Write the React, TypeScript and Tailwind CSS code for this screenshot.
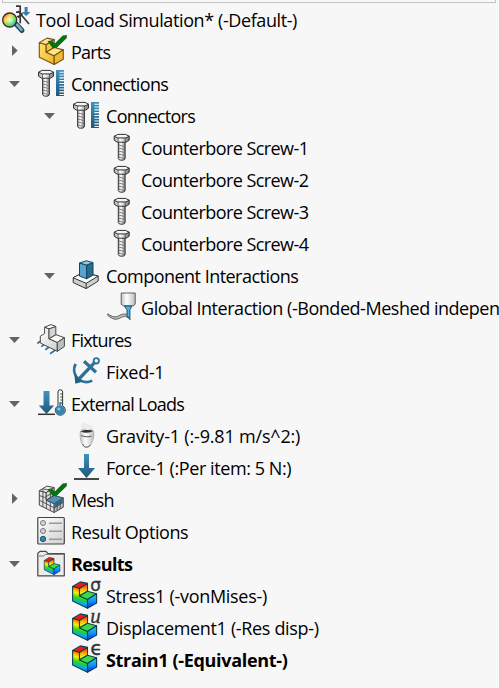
import React from "react";

type IconProps = { children: React.ReactNode };

function Icon({ children }: IconProps) {
  return (
    <svg viewBox="0 0 32 32" className="mr-[2px] h-8 w-8 shrink-0 overflow-visible" strokeLinejoin="round">
      {children}
    </svg>
  );
}

function Gradients() {
  return (
    <svg className="absolute h-0 w-0" aria-hidden="true">
      <defs>
        <linearGradient id="steel" x1="0" x2="1" y1="0" y2="0">
          <stop offset="0" stopColor="#a9a9a9" />
          <stop offset=".4" stopColor="#ffffff" />
          <stop offset="1" stopColor="#777777" />
        </linearGradient>
        <linearGradient id="pearl" x1="0" x2="1" y1="0" y2="0">
          <stop offset="0" stopColor="#c4c4c4" />
          <stop offset=".4" stopColor="#ffffff" />
          <stop offset="1" stopColor="#bdbdbd" />
        </linearGradient>
        <linearGradient id="blue" x1="0" x2="0" y1="0" y2="1">
          <stop offset="0" stopColor="#3f93bf" />
          <stop offset="1" stopColor="#1f577b" />
        </linearGradient>
        <linearGradient id="gold" x1="0" x2="1" y1="0" y2="1">
          <stop offset="0" stopColor="#ffe06a" />
          <stop offset="1" stopColor="#f0b62c" />
        </linearGradient>
        <linearGradient id="paper" x1="0" x2="1" y1="0" y2="1">
          <stop offset="0" stopColor="#ffffff" />
          <stop offset="1" stopColor="#cfcfcf" />
        </linearGradient>
        <linearGradient id="rainbowLeft" gradientUnits="userSpaceOnUse" x1="9" x2="3" y1="3" y2="26">
          <stop offset="0" stopColor="#ff1a00" />
          <stop offset=".25" stopColor="#ff7a00" />
          <stop offset=".45" stopColor="#ffee00" />
          <stop offset=".65" stopColor="#22d822" />
          <stop offset=".85" stopColor="#00a8ff" />
          <stop offset="1" stopColor="#0048e0" />
        </linearGradient>
        <linearGradient id="rainbowRiser" gradientUnits="userSpaceOnUse" x1="12" x2="12" y1="4" y2="16">
          <stop offset="0" stopColor="#ff2000" />
          <stop offset=".45" stopColor="#ffb000" />
          <stop offset=".75" stopColor="#eaff00" />
          <stop offset="1" stopColor="#30d820" />
        </linearGradient>
        <linearGradient id="rainbowRight" gradientUnits="userSpaceOnUse" x1="20" x2="20" y1="14" y2="28">
          <stop offset="0" stopColor="#20d8d0" />
          <stop offset=".5" stopColor="#1490ff" />
          <stop offset="1" stopColor="#0a30d8" />
        </linearGradient>
        <linearGradient id="lensHue" x1="0" x2="1" y1="0" y2="1">
          <stop offset=".08" stopColor="#ff5a48" />
          <stop offset=".35" stopColor="#ffd84a" />
          <stop offset=".6" stopColor="#6be45a" />
          <stop offset=".95" stopColor="#38b4f0" />
        </linearGradient>
        <radialGradient id="lensShine">
          <stop offset="0" stopColor="#ffffff" stopOpacity=".85" />
          <stop offset="1" stopColor="#ffffff" stopOpacity="0" />
        </radialGradient>
      </defs>
    </svg>
  );
}

type BlockProps = { top: string; front: string; riser: string; tread: string; side: string; line: string; width?: number };

function StepBlock({ top, front, riser, tread, side, line, width = 1.1 }: BlockProps) {
  return (
    <g stroke={line} strokeWidth={width}>
      <path d="M.6 6.5 7.5 8.3V16l8 3.5v8.8L.6 21Z" fill={front} />
      <path d="m7.5 8.3 8-4.9v7.9l-8 4.7Z" fill={riser} />
      <path d="m.6 6.5 7.6-4.6 7.3 1.5-8 4.9Z" fill={top} />
      <path d="m7.5 16 8-4.7 9.1 2.4-9.1 5.8Z" fill={tread} />
      <path d="m15.5 19.5 9.1-5.8V23l-9.1 5.3Z" fill={side} />
    </g>
  );
}

function RainbowBlock() {
  return (
    <StepBlock
      top="#f01810"
      front="url(#rainbowLeft)"
      riser="url(#rainbowRiser)"
      tread="#35dd48"
      side="url(#rainbowRight)"
      line="#123f52"
      width={1.1}
    />
  );
}

function Check() {
  return <path d="m10.5 5.2 4-.9 3.4 3.2 7.8-8 4.1-.5v3L19.5 12h-4Z" fill="#0a7012" />;
}

function Screw() {
  return (
    <g stroke="#333" strokeWidth="1">
      <path d="M5.6 9.5h6.8v17l-1.3 1.6H6.9l-1.3-1.6Z" fill="url(#steel)" />
      <path d="m5.8 13 6.4 1.6M5.8 16l6.4 1.6M5.8 19l6.4 1.6M5.8 22l6.4 1.6M5.8 25l6.4 1.6" strokeWidth=".8" stroke="#666" />
      <path d="M1.5 4.2v4l3 2h9l3-2v-4Z" fill="url(#steel)" />
      <path d="m1.5 4.3 3.6-1.9H13l3.5 1.9L13 5.9H5.1Z" fill="#f5f5f5" />
      <path d="M5.4 6v4M12.6 6v4" strokeWidth=".7" />
    </g>
  );
}

const screwIcon = (
  <Icon>
    <g transform="translate(5.7 0)">
      <Screw />
    </g>
  </Icon>
);

const connectionsIcon = (
  <Icon>
    <Screw />
    <path
      d="M19 2h8v1.7h-4.6v1.1H27v1.7h-4.6v1.1H27v1.7h-4.6v1.1H27v1.7h-4.6v1.1H27v1.7h-4.6V16H27v1.7h-4.6v1.1H27v1.7h-4.6v1.1H27v1.7h-4.6v1.1H27v1.7h-4.6V27H27v1h-8Z"
      fill="url(#blue)"
    />
  </Icon>
);

const studyIcon = (
  <Icon>
    <g stroke="#383838" fill="none" strokeWidth="1.7">
      <path d="M14 2.2h4.2v17M18 8.2h-4M15 12.5h3M16 7l11 13" />
      <path d="m20.5 9.5-4.5 4" />
    </g>
    <path d="M22.6 3h3v5h3l-4.5 4-4.5-4h3Z" fill="#3a7fa8" />
    <path d="m14.5 20.5 5.5 6" stroke="#21485f" strokeWidth="5" strokeLinecap="round" />
    <path d="m15 20.6 4.6 5.2" stroke="#7eb1cc" strokeWidth="2.5" strokeLinecap="round" />
    <circle cx="7.7" cy="16" r="7" fill="url(#lensHue)" stroke="#303030" strokeWidth="1.4" />
    <circle cx="8" cy="16" r="4.8" fill="url(#lensShine)" />
  </Icon>
);

const partsIcon = (
  <Icon>
    <g transform="translate(1.7 .2)">
      <StepBlock top="#ffe68c" front="url(#gold)" riser="#f5c644" tread="#ffe584" side="#f1ba32" line="#76521b" />
    </g>
    <Check />
  </Icon>
);

const interactionsIcon = (
  <Icon>
    <g stroke="#333" strokeWidth="1">
      <path d="m1.2 17.8 10-5.5 15 3.8v5l-12 7.5-13-6Z" fill="#cfcfcf" />
      <path d="m1.2 17.8 10-5.5 15 3.8-12 7.2Z" fill="#fafafa" />
      <path d="M14.2 23.3v5.3" />
    </g>
    <g stroke="#15445e" strokeWidth="1">
      <path d="m7.5 3 7.2 2v13.7l-7.2-2.6Z" fill="#58a4cc" />
      <path d="m14.7 5 6.3-2.5v12.7l-6.3 3.5Z" fill="#286b93" />
      <path d="m7.5 3 6.7-2.2L21 2.5 14.7 5Z" fill="#94cce8" />
    </g>
  </Icon>
);

const gluingIcon = (
  <Icon>
    <path d="M.8 23.5c5 4 8 4.8 12.5 2.4 4.2-2.4 6.8-1.7 10 2l-1.5-4.3c-4-2.6-6.5-1.7-10 .2-3.5 1.8-6.5 1.2-11-2Z" fill="#bcbcbc" stroke="#555" strokeWidth=".9" />
    <path d="M14.2 1h14v11.3L26 13.8h-9.6l-2.2-1.5Z" fill="url(#pearl)" stroke="#505050" strokeWidth=".9" />
    <path d="M17.3 14h7.6l-2 3.8v8.4L20 24.5v-6.7Z" fill="#54b0d6" stroke="#155374" strokeWidth="1" />
  </Icon>
);

const fixturesIcon = (
  <Icon>
    <path d="m.3 19.5 4.8-3.6M4.3 22.6l5-3.7m-1 6.9 5.2-3.7M13 29.7l5.8-4" stroke="#2f789f" strokeWidth="1.8" />
    <g stroke="#484848" strokeWidth="1">
      <path d="m3.3 12.2 4.3-2.7V3.2l4.4 1.6v10l8.3 3.6v8.9L3.3 19Z" fill="url(#paper)" />
      <path d="m12 4.8 6.8-2.4v8.3L12 14.8Z" fill="#d4d4d4" />
      <path d="M7.6 3.2 14 .6l4.8 1.8L12 4.8Z" fill="#fff" />
      <path d="m12 14.8 7-4.1 8.4 3-7.1 4.7Z" fill="#fafafa" />
      <path d="m20.3 18.4 7.1-4.7v8.8l-7.1 4.8Z" fill="#bdbdbd" />
    </g>
  </Icon>
);

const anchorIcon = (
  <Icon>
    <g fill="none" stroke="#2c7399">
      <circle cx="24.3" cy="4.8" r="2.7" strokeWidth="1.8" />
      <path d="M22.3 6.9 5.5 24.5" strokeWidth="3.3" />
      <path d="m12 5.3 12 11" strokeWidth="3.3" />
      <path d="M3.6 7.8c-3 6-1.3 12.5 4.1 16.4 4 2.5 8.4 2.4 12.6.4" strokeWidth="2.6" />
    </g>
    <path d="m2.3 18 8 7.8-7 2Z" fill="#245f82" />
  </Icon>
);

const loadsIcon = (
  <Icon>
    <path d="M6.5 3h6v14.4h4.7L9.5 26l-7.7-8.6h4.7Z" fill="url(#blue)" />
    <path d="M1 26.3h17" stroke="#333" strokeWidth="1.5" />
    <path d="M21 4a2.3 2.3 0 0 1 4.6 0v13.8a5 5 0 1 1-4.6 0Z" fill="#f8f8f8" stroke="#333" strokeWidth="1" />
    <path d="M23.3 6h2M23.3 9h2M23.3 12h2M23.3 15h2" stroke="#333" strokeWidth=".9" />
    <circle cx="23.3" cy="22.4" r="4.6" fill="#3485ad" />
    <path d="M23.3 14v8" stroke="#3485ad" strokeWidth="2" />
    <circle cx="22" cy="21" r="1.5" fill="#8ac5df" />
  </Icon>
);

const appleIcon = (
  <Icon>
    <path d="M9 3.5c3-3 5.5 2 10 1.5l3 4-13 .3Z" fill="#ececec" />
    <path d="M8.5 11c3-3 6-1.5 7-.3 2-1.7 5-1.2 6.2.8.7 4-.5 10-3.6 14.3-2 2.2-5.4 2-7 0C8.3 22 7.5 15 8.5 11Z" fill="url(#pearl)" stroke="#a0a0a0" strokeWidth=".7" />
    <path d="M8.7 11.5c4-2.2 8-1.8 12.7-.8-3 2.2-8.3 2.7-12.7.8Z" fill="#303030" />
    <path d="M9.2 15.5c3 1.4 7 1.8 10.3.7M10.5 24c2 4 5.6 4 7.8.8" fill="none" stroke="#555" strokeWidth="1" />
  </Icon>
);

const forceIcon = (
  <Icon>
    <path d="M12 2h5v14h6l-8.5 10L6 16h6Z" fill="url(#blue)" />
    <path d="M2 27h25" stroke="#333" strokeWidth="1.8" />
  </Icon>
);

const meshIcon = (
  <Icon>
    <g transform="translate(1.7 .2)">
      <StepBlock top="#eee" front="#e5e5e5" riser="#ddd" tread="#4d94b8" side="#bdbdbd" line="#484848" width={1} />
      <path d="m15.5 19.5 9.1-5.8v4l-9.1 5.9Z" fill="#28739c" />
      <path
        d="M4.2 5v17.8M7.7 16v8.5M11.6 18v8.5M.8 11.4l6.7 2.3M.8 16.1 15.5 23.6M18.5 17.7v9M21.5 15.8v9M15.5 23.8l9.1-5.7M4.2 4.6l7.4 1.6v7.6M7.5 12.4l8-4.8"
        fill="none"
        stroke="#484848"
        strokeWidth=".9"
      />
    </g>
    <Check />
  </Icon>
);

const optionsIcon = (
  <Icon>
    <rect x=".8" y="1.5" width="26.5" height="26.5" rx="1" fill="url(#paper)" stroke="#444" strokeWidth="1.2" />
    <circle cx="6" cy="7" r="2.5" fill="#d5d5d5" stroke="#777" />
    <circle cx="6" cy="15" r="2.5" fill="#d5d5d5" stroke="#777" />
    <circle cx="6" cy="23" r="2.7" fill="#3584aa" stroke="#205a78" />
    <path d="M12 7.2h13M12 15.2h13M12 23.2h13" stroke="#999" strokeWidth="1.6" />
  </Icon>
);

const resultsIcon = (
  <Icon>
    <path d="M.8 27.8V5.3L3 3.4h6l2 2.3h16.3v22.1Z" fill="#ececec" stroke="#484848" strokeWidth="1.2" />
    <path d="M1.5 8h5l2-1.6h18" fill="none" stroke="#777" strokeWidth="1" />
    <g transform="translate(6.9 8.2) scale(.65)">
      <RainbowBlock />
    </g>
  </Icon>
);

const plotIcon = (letter: string) => (
  <Icon>
    <RainbowBlock />
    <text
      x="18.2"
      y="11"
      fill="#333"
      stroke="#333"
      strokeWidth=".3"
      className={
        letter === "u"
          ? "font-['Liberation_Serif',serif] text-[21px] italic"
          : letter === "σ"
            ? "font-['DejaVu_Sans',sans-serif] text-[17px]"
            : "font-['DejaVu_Sans',sans-serif] text-[20px]"
      }
    >
      {letter}
    </text>
  </Icon>
);

type Node = {
  label: string;
  level: 0 | 1 | 2 | 3;
  icon: React.ReactNode;
  arrow?: "open" | "closed";
  style: string;
};

const nodes: Node[] = [
  { label: "Tool Load Simulation* (-Default-)", level: 0, icon: studyIcon, style: "tracking-[-0.4px]" },
  { label: "Parts", level: 1, icon: partsIcon, arrow: "closed", style: "tracking-[-0.8px]" },
  { label: "Connections", level: 1, icon: connectionsIcon, arrow: "open", style: "tracking-[-0.65px]" },
  { label: "Connectors", level: 2, icon: connectionsIcon, arrow: "open", style: "tracking-[-0.7px]" },
  { label: "Counterbore Screw-1", level: 3, icon: screwIcon, style: "tracking-[-0.56px]" },
  { label: "Counterbore Screw-2", level: 3, icon: screwIcon, style: "tracking-[-0.56px]" },
  { label: "Counterbore Screw-3", level: 3, icon: screwIcon, style: "tracking-[-0.56px]" },
  { label: "Counterbore Screw-4", level: 3, icon: screwIcon, style: "tracking-[-0.56px]" },
  { label: "Component Interactions", level: 2, icon: interactionsIcon, arrow: "open", style: "tracking-[-0.53px]" },
  { label: "Global Interaction (-Bonded-Meshed indepen", level: 3, icon: gluingIcon, style: "tracking-[-0.46px]" },
  { label: "Fixtures", level: 1, icon: fixturesIcon, arrow: "open", style: "tracking-[-0.8px]" },
  { label: "Fixed-1", level: 2, icon: anchorIcon, style: "tracking-[-0.3px]" },
  { label: "External Loads", level: 1, icon: loadsIcon, arrow: "open", style: "tracking-[-0.73px]" },
  { label: "Gravity-1 (:-9.81 m/s^2:)", level: 2, icon: appleIcon, style: "tracking-[-0.18px]" },
  { label: "Force-1 (:Per item: 5 N:)", level: 2, icon: forceIcon, style: "tracking-[-0.42px]" },
  { label: "Mesh", level: 1, icon: meshIcon, arrow: "closed", style: "tracking-[-0.8px]" },
  { label: "Result Options", level: 1, icon: optionsIcon, style: "tracking-[-0.4px]" },
  { label: "Results", level: 1, icon: resultsIcon, arrow: "open", style: "font-bold tracking-[-0.6px]" },
  { label: "Stress1 (-vonMises-)", level: 2, icon: plotIcon("σ"), style: "tracking-[-0.3px]" },
  { label: "Displacement1 (-Res disp-)", level: 2, icon: plotIcon("u"), style: "tracking-[-0.34px]" },
  { label: "Strain1 (-Equivalent-)", level: 2, icon: plotIcon("ϵ"), style: "font-bold tracking-[-0.32px]" },
];

const indents = ["pl-[2px]", "pl-[2px]", "pl-[37px]", "pl-[72px]"];

function Arrow({ kind }: { kind?: "open" | "closed" }) {
  return (
    <span className="flex h-8 w-[35px] shrink-0">
      {kind && (
        <svg viewBox="0 0 35 32" className="h-8 w-[35px]" fill="#646464">
          <path d={kind === "open" ? "M7 13h11l-5.5 6Z" : "M10 9.3v10.6l5.7-5.3Z"} />
        </svg>
      )}
    </span>
  );
}

function TreeRow({ node }: { node: Node }) {
  return (
    <li className={`flex h-8 items-center ${indents[node.level]}`}>
      {node.level > 0 && <Arrow kind={node.arrow} />}
      {node.icon}
      <span className={`whitespace-nowrap ${node.style}`}>{node.label}</span>
    </li>
  );
}

export default function App() {
  return (
    <main className="h-[688px] w-[499px] overflow-hidden bg-[#f7f7f7] font-['Open_Sans','Noto_Sans',sans-serif] text-[18px] leading-8 text-black">
      <Gradients />
      <div className="ml-[2px] h-[3px] w-[494px] border-x border-b border-[#c3c3c3]" />
      <ul className="pt-px">
        {nodes.map((node) => (
          <TreeRow key={node.label} node={node} />
        ))}
      </ul>
    </main>
  );
}
